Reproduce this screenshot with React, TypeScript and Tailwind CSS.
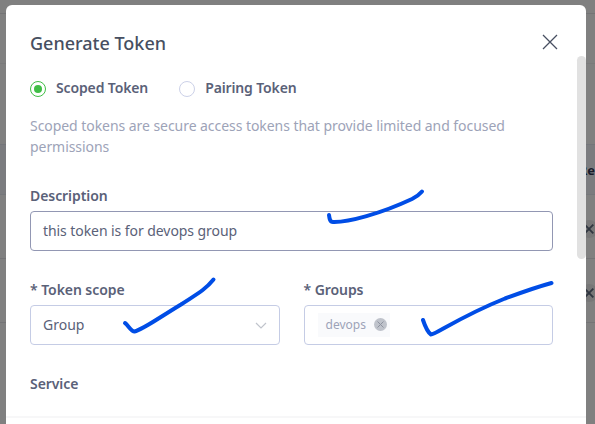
import type { ReactNode } from 'react';

function Radio({ label, checked = false }: { label: string; checked?: boolean }) {
  return (
    <label className="flex items-center">
      <span
        className={
          checked
            ? 'mt-0.5 flex size-4 items-center justify-center rounded-full border border-[#40be46]'
            : 'mt-0.5 flex size-4 items-center justify-center rounded-full border border-[#ccd1e8]'
        }
      >
        {checked && <span className="size-2 rounded-full bg-[#40be46]" />}
      </span>
      <span className="ml-2.5 text-sm leading-5 font-semibold tracking-[-0.13px]">{label}</span>
    </label>
  );
}

function Field({ label, children }: { label: string; children: ReactNode }) {
  return (
    <div className="min-w-0 flex-1">
      <div className="h-[25px] text-sm leading-5 font-semibold tracking-[-0.07px]">{label}</div>
      {children}
    </div>
  );
}

function TableBackdrop() {
  return (
    <div className="absolute inset-0 flex flex-col bg-[#808080] text-[#303640]">
      <div className="h-[14px] border-b border-[#747476]" />
      <div className="h-[50px] border-b border-[#7a7a7b]" />
      <div className="h-[81px] border-b border-[#74767b]" />
      <div className="flex h-[50px] items-center justify-end border-b border-[#75777b] bg-[#7b7c7f]">
        <span className="mt-0.5 text-[13px] font-bold whitespace-nowrap text-[#181b2a]">Re</span>
      </div>
      <BackdropRow />
      <BackdropRow />
    </div>
  );
}

function BackdropRow() {
  return (
    <div className="flex h-16 items-center justify-end overflow-hidden border-b border-[#747476]">
      <span className="mt-1 -mr-[3px] flex size-[18px] items-center justify-center rounded-full bg-[#777778]">
        <svg className="size-2.5" viewBox="0 0 10 10" fill="none" stroke="currentColor" strokeWidth="1.8">
          <path d="M.7.7l8.600 8.600M9.300.7L.7 9.300" />
        </svg>
      </span>
    </div>
  );
}

function PenMarks() {
  return (
    <svg
      className="pointer-events-none absolute inset-0"
      width="595"
      height="424"
      viewBox="0 0 595 424"
      fill="none"
      stroke="#004de6"
      strokeWidth="4"
      strokeLinecap="round"
      strokeLinejoin="round"
    >
      <path d="M329 215C329.500 219 330 222 333 222C348 222.500 381 213.500 412 199C416 197 419.500 194.500 422 191.500" />
      <path d="M125 323C128 325 131 331.500 134.500 331.500C143 329.500 157 319 181 304.500C197 294 205 290 213.500 279.500" />
      <path d="M423 320C425 326 428 332.500 431 334.500C435 335 459 317 505 298.500C520 293 535 287.500 551.500 283" />
    </svg>
  );
}

export default function App() {
  return (
    <div className="relative h-[424px] w-[595px] overflow-hidden font-['Noto_Sans','Open_Sans',sans-serif] text-[#5a6178]">
      <TableBackdrop />
      <div className="relative mt-[5px] ml-1.5 flex h-[419px] w-[580px] flex-col rounded-t-md bg-white">
        <header className="flex h-[73px] items-center justify-between pr-7 pl-6">
          <h1 className="mt-0.5 text-lg font-medium text-[#474f61]">Generate Token</h1>
          <svg className="size-4 text-[#474f61]" viewBox="0 0 16 16" fill="none" stroke="currentColor" strokeWidth="1.3">
            <path d="M1 1l14 14M15 1L1 15" />
          </svg>
        </header>
        <main className="h-[338px] px-6">
          <div className="flex h-5 gap-[31px]">
            <Radio label="Scoped Token" checked />
            <Radio label="Pairing Token" />
          </div>
          <p className="mt-[17px] w-[510px] text-sm leading-[21px] tracking-[-0.055px] text-[#9da3b8]">
            Scoped tokens are secure access tokens that provide limited and focused permissions
          </p>
          <div className="mt-[29px] flex w-[523px]">
            <Field label="Description">
              <div className="flex h-10 items-center rounded border border-[#9297b3] px-3 text-sm tracking-[-0.07px]">
                this token is for devops group
              </div>
            </Field>
          </div>
          <div className="mt-[29px] flex w-[523px] gap-6">
            <Field label="* Token scope">
              <div className="flex h-10 items-center justify-between rounded border border-[#c5cce5] px-3 text-sm">
                Group
                <svg className="size-3" viewBox="0 0 12 12" fill="none" stroke="#c0c4cc" strokeWidth="1.2">
                  <path d="M1 4l5 5 5-5" />
                </svg>
              </div>
            </Field>
            <Field label="* Groups">
              <div className="flex h-10 items-center rounded border border-[#c5cce5] px-[13px]">
                <span className="mb-px flex h-6 w-[72px] items-center justify-between bg-[#f9fafc] pr-[3px] pl-2 text-xs text-[#9da3b8]">
                  devops
                  <svg className="mb-px size-[13px]" viewBox="0 0 13 13" fill="none">
                    <circle cx="6.500" cy="6.500" r="6.500" fill="#bfc3cb" />
                    <path d="M3.500 3.500l6 6M9.500 3.500l-6 6" stroke="#8e93a0" />
                  </svg>
                </span>
              </div>
            </Field>
          </div>
          <div className="mt-[29px] text-sm leading-5 font-semibold tracking-[-0.07px]">Service</div>
        </main>
        <div className="h-0.5 shrink-0 bg-[#f7f7f8]" />
        <div className="absolute top-[51px] right-0 h-[203px] w-[9px] rounded-full bg-[#e1e1e1]" />
      </div>
      <PenMarks />
    </div>
  );
}
